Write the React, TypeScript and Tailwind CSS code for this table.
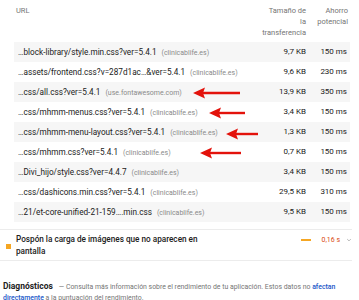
import React from "react";

type Row = { url: string; host: string; size: string; time: string };

const rows: Row[] = [
  { url: "…block-library/style.min.css?ver=5.4.1", host: "(clinicablife.es)", size: "9,7 KB", time: "150 ms" },
  { url: "…assets/frontend.css?v=287d1ac…&ver=5.4.1", host: "(clinicablife.es)", size: "9,6 KB", time: "230 ms" },
  { url: "…css/all.css?ver=5.4.1", host: "(use.fontawesome.com)", size: "13,9 KB", time: "350 ms" },
  { url: "…css/mhmm-menus.css?ver=5.4.1", host: "(clinicablife.es)", size: "3,4 KB", time: "150 ms" },
  { url: "…css/mhmm-menu-layout.css?ver=5.4.1", host: "(clinicablife.es)", size: "1,3 KB", time: "150 ms" },
  { url: "…css/mhmm.css?ver=5.4.1", host: "(clinicablife.es)", size: "0,7 KB", time: "150 ms" },
  { url: "…Divi_hijo/style.css?ver=4.4.7", host: "(clinicablife.es)", size: "3,4 KB", time: "150 ms" },
  { url: "…css/dashicons.min.css?ver=5.4.1", host: "(clinicablife.es)", size: "29,5 KB", time: "310 ms" },
  { url: "…21/et-core-unified-21-159….min.css", host: "(clinicablife.es)", size: "9,5 KB", time: "150 ms" },
];

// red annotation arrows drawn over the table
const arrows = [
  { head: 193, tail: 240, y: 93 },
  { head: 209, tail: 245, y: 113 },
  { head: 226, tail: 258, y: 134 },
  { head: 200, tail: 241, y: 153 },
];

function Arrow({ head, tail, y }: { head: number; tail: number; y: number }) {
  const w = tail - head;
  return (
    <svg
      className="absolute"
      style={{ left: head, top: y - 6, width: w, height: 12 }}
      viewBox={`0 0 ${w} 12`}
    >
      <line x1={10} y1={6} x2={w} y2={6} stroke="#e3120b" strokeWidth={2.4} />
      <polygon points="0,6 12,0.5 10,6 12,11.5" fill="#e3120b" />
    </svg>
  );
}

export default function App() {
  return (
    <div className="relative w-[359px] h-[300px] overflow-hidden bg-white font-['Roboto',sans-serif] text-[#212121]">
      <div className="ml-[14px] w-[336px]">
        <div className="flex items-start h-[42px] pt-[5px] text-[7.5px] leading-[11px] text-[#757575]">
          <div className="flex-1 pl-[2px]">URL</div>
          <div className="w-[60px] text-right">
            Tamaño de
            <br />
            la
            <br />
            transferencia
          </div>
          <div className="w-[44px] pr-[2px] text-right">
            Ahorro
            <br />
            potencial
          </div>
        </div>
        {rows.map((r, i) => (
          <div
            key={i}
            className={`flex items-center h-[20px] ${i % 2 === 0 ? "bg-[#f6f6f6]" : "bg-white"}`}
          >
            <div className="flex-1 min-w-0 pl-[4px] whitespace-nowrap overflow-hidden text-[8.2px]">
              {r.url}
              <span className="ml-[5px] text-[7px] text-[#8a8a8a]">{r.host}</span>
            </div>
            <div className="w-[60px] text-right text-[8px]">{r.size}</div>
            <div className="w-[44px] pr-[3px] text-right text-[8px]">{r.time}</div>
          </div>
        ))}
      </div>

      <div className="mt-[7px] w-[352px] border-t border-b border-[#ececec] h-[32px] flex items-start">
        <div className="w-[16px] flex justify-center pt-[14px] pl-[1px]">
          <div className="w-[5px] h-[5px] bg-[#f5a623]" />
        </div>
        <div className="flex-1 pt-[3px] text-[8.2px] leading-[12px] font-medium text-[#212121]">
          Pospón la carga de imágenes que no aparecen en
          <br />
          pantalla
        </div>
        <div className="flex items-center pt-[5px]">
          <div className="w-[10px] h-[2px] bg-[#f5a623]" />
          <span className="ml-[10px] text-[7px] text-[#d9480f]">0,16 s</span>
          <svg className="ml-[6px] w-[6px] h-[6px]" viewBox="0 0 10 10" fill="none" stroke="#b0b0b0" strokeWidth="1.5">
            <path d="M2 3.5 L5 6.5 L8 3.5" />
          </svg>
        </div>
      </div>

      <div className="mt-[20px] pl-[3px] leading-[11px] text-[6.9px] text-[#757575]">
        <span className="text-[8.5px] font-bold text-[#212121]">Diagnósticos</span>
        <span className="ml-[6px]">— Consulta más información sobre el rendimiento de tu aplicación. Estos datos no </span>
        <span className="text-[#1a56c8] font-medium">afectan directamente</span>
        <span> a la puntuación del rendimiento.</span>
      </div>

      {arrows.map((a, i) => (
        <Arrow key={i} {...a} />
      ))}
    </div>
  );
}
